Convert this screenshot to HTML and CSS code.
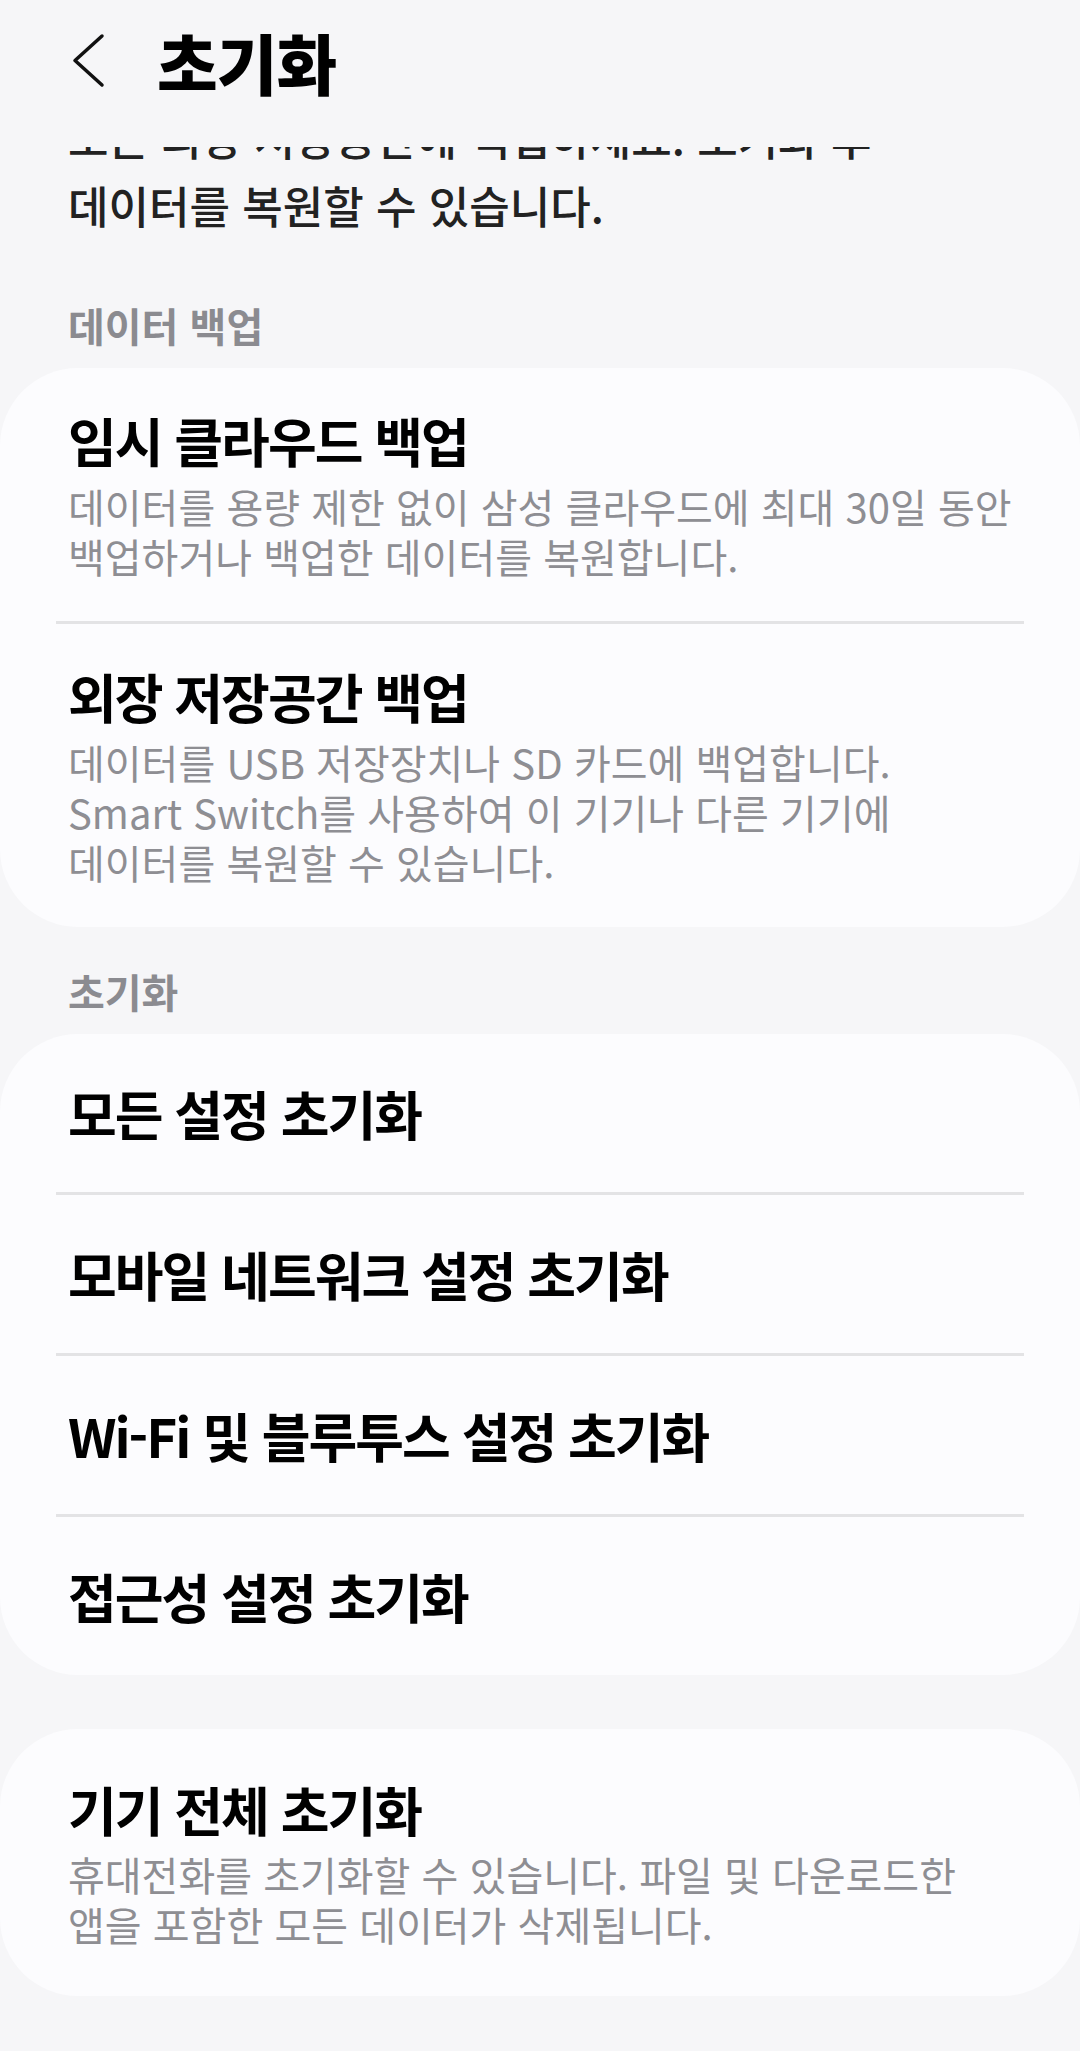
FILE: index.html
```html
<!DOCTYPE html>
<html lang="ko">
<head>
  <meta charset="UTF-8">
  <meta name="viewport" content="width=device-width, initial-scale=1.0">
  <title>초기화</title>
  <link rel="stylesheet" href="styles.css">
</head>
<body>
  <header class="topbar">
    <svg class="back" width="34" height="56" viewBox="0 0 34 56">
      <polyline points="30,3 3,27.5 30,52" />
    </svg>
    <h1>초기화</h1>
  </header>

  <!-- 위쪽으로 스크롤된 안내 문구 -->
  <div class="intro">
    <p>모든 외장 저장공간에 백업하세요. 초기화 후<br>데이터를 복원할 수 있습니다.</p>
  </div>

  <div class="label">데이터 백업</div>
  <section class="card">
    <div class="item">
      <div class="item-title">임시 클라우드 백업</div>
      <div class="item-desc">데이터를 용량 제한 없이 삼성 클라우드에 최대 30일 동안<br>백업하거나 백업한 데이터를 복원합니다.</div>
    </div>
    <div class="divider"></div>
    <div class="item">
      <div class="item-title">외장 저장공간 백업</div>
      <div class="item-desc">데이터를 USB 저장장치나 SD 카드에 백업합니다.<br>Smart Switch를 사용하여 이 기기나 다른 기기에<br>데이터를 복원할 수 있습니다.</div>
    </div>
  </section>

  <div class="label">초기화</div>
  <section class="card">
    <div class="row">모든 설정 초기화</div>
    <div class="divider"></div>
    <div class="row">모바일 네트워크 설정 초기화</div>
    <div class="divider"></div>
    <div class="row">Wi-Fi 및 블루투스 설정 초기화</div>
    <div class="divider"></div>
    <div class="row">접근성 설정 초기화</div>
  </section>

  <section class="card card-single">
    <div class="item">
      <div class="item-title">기기 전체 초기화</div>
      <div class="item-desc">휴대전화를 초기화할 수 있습니다. 파일 및 다운로드한<br>앱을 포함한 모든 데이터가 삭제됩니다.</div>
    </div>
  </section>
</body>
</html>
```

FILE: styles.css
```css
body {
  margin: 0;
  padding: 0;
  width: 1080px;
  background-color: #f6f6f8;
  color: #000;
  font-family: "Noto Sans CJK KR", "Noto Sans", sans-serif;
  overflow: hidden;
}

.topbar {
  display: flex;
  align-items: center;
  height: 122px;
  padding-left: 72px;
}

.back {
  flex-shrink: 0;
}

.back polyline {
  fill: none;
  stroke: #111;
  stroke-width: 3.5;
  stroke-linecap: round;
  stroke-linejoin: round;
}

h1 {
  margin: 0 0 0 51px;
  font-size: 66px;
  line-height: 1;
  font-weight: 800;
  letter-spacing: -1px;
}

.intro {
  height: 92px;
  margin: 25px 0 22px 0;
  padding: 0 68px;
  overflow: hidden;
  display: flex;
  flex-direction: column;
  justify-content: flex-end;
}

.intro p {
  margin: 0;
  font-size: 44px;
  line-height: 68px;
  font-weight: 500;
  color: #222;
}

.label {
  padding: 39px 68px 18px 68px;
  font-size: 40px;
  line-height: 50px;
  font-weight: 700;
  color: #8b8b90;
}

.card {
  background-color: #fcfcfe;
  border-radius: 78px;
}

.card-single {
  margin-top: 54px;
}

.item {
  padding: 40px 30px 40px 68px;
}

.card-single .item {
  padding: 48px 30px 47px 68px;
}

.item-title,
.row {
  font-size: 53px;
  line-height: 64px;
  font-weight: 700;
  letter-spacing: -2px;
  color: #000;
}

.item-desc {
  margin-top: 9px;
  font-size: 40px;
  line-height: 50px;
  color: #8e8e93;
}

.card-single .item-desc {
  margin-top: 8px;
}

.row {
  padding: 47px 30px 47px 68px;
}

.divider {
  height: 3px;
  margin: 0 56px;
  background-color: #e3e3e5;
}
```
